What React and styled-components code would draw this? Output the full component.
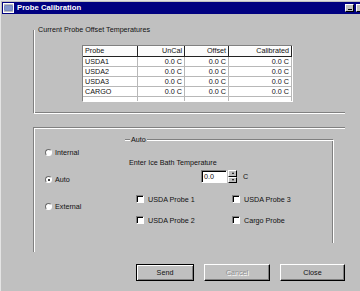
import React from "react";
import styled, { createGlobalStyle, css } from "styled-components";

const GlobalStyle = createGlobalStyle`
  * { box-sizing: border-box; }
  html, body { margin: 0; padding: 0; background: #c0c0c0; }
  body {
    font-family: "Liberation Sans", Arial, sans-serif;
    font-size: 7.2px;
    color: #111;
  }
`;

const Window = styled.div`
  width: 360px;
  height: 291px;
  overflow: hidden;
  background: #c0c0c0;
  border-top: 1px solid #e4e4e4;
  border-left: 1px solid #e4e4e4;
  padding: 1px 0 0 1px;
  display: flex;
  flex-direction: column;
`;

const TitleBar = styled.div`
  height: 12px;
  width: 370px;
  flex: none;
  background: #000080;
  display: flex;
  align-items: center;
  padding-left: 1px;
`;

const TitleText = styled.span`
  color: #fff;
  font-weight: bold;
  font-size: 7.7px;
  margin-left: 3px;
  line-height: 12px;
`;

const TitleButtons = styled.div`
  margin-left: auto;
  display: flex;
  gap: 2px;
  padding-right: 7px;
`;

const CapButton = styled.div`
  width: 9px;
  height: 8px;
  background: #c0c0c0;
  border: 1px solid;
  border-color: #fff #000 #000 #fff;
  position: relative;
  display: flex;
  align-items: flex-end;
  justify-content: center;
  padding-bottom: 1px;
`;

const MinGlyph = styled.div`
  width: 4px;
  height: 1.5px;
  background: #000;
`;

const Body = styled.div`
  margin-left: 31px;
  display: flex;
  flex-direction: column;
`;

const TopGroup = styled.div`
  margin-top: 16px;
  width: 312px;
  height: 84px;
  border-left: 1px solid #808080;
  border-bottom: 1px solid #fff;
  box-shadow: inset 1px 0 #fff, inset 0 -1px #808080;
  display: flex;
  flex-direction: column;
`;

const Legend = styled.div`
  height: 9px;
  line-height: 9px;
  margin-top: -5px;
  margin-left: 3px;
  padding: 0 1px;
  align-self: flex-start;
  background: #c0c0c0;
  white-space: nowrap;
`;

const Table = styled.div`
  margin-top: 11px;
  margin-left: 48px;
  width: 211px;
  height: 57px;
  background: #fff;
  border: 1px solid;
  border-color: #808080 #fff #fff #808080;
  display: grid;
  grid-template-columns: 55px 47px 44px 1fr;
  grid-template-rows: 11px repeat(5, 10px);
  overflow: hidden;
`;

const HeadCell = styled.div`
  background: #fbfbfb;
  border-right: 1px solid #222;
  border-bottom: 1px solid #222;
  box-shadow: inset 1px 1px #fff;
  line-height: 10px;
  padding: 0 2px;
  text-align: ${(p) => (p.$left ? "left" : "right")};
  white-space: nowrap;
  overflow: hidden;
`;

const Cell = styled.div`
  border-right: 1px solid #b8b8b8;
  border-bottom: 1px solid #b8b8b8;
  line-height: 9px;
  padding: 0 2px;
  text-align: ${(p) => (p.$left ? "left" : "right")};
  white-space: nowrap;
  overflow: hidden;
`;

const LowerGroup = styled.div`
  margin-top: 13px;
  width: 312px;
  height: 125px;
  border-top: 1px solid #808080;
  border-left: 1px solid #808080;
  box-shadow: inset 1px 1px #fff;
  display: flex;
  justify-content: space-between;
  align-items: flex-start;
`;

const RadioColumn = styled.div`
  margin-left: 11px;
  margin-top: 20px;
  display: flex;
  flex-direction: column;
  gap: 18px;
`;

const RadioItem = styled.label`
  display: flex;
  align-items: center;
  height: 9px;
  gap: 3px;
`;

const RadioDot = styled.span`
  width: 7px;
  height: 7px;
  border-radius: 50%;
  background: #fff;
  border: 1px solid;
  border-color: #6a6a6a #fff #fff #6a6a6a;
  box-shadow: 0 0 0 0.5px #c0c0c0;
  position: relative;
  flex: none;
  ${(p) =>
    p.$checked &&
    css`
      &::after {
        content: "";
        position: absolute;
        left: 1.5px;
        top: 1.5px;
        width: 2px;
        height: 2px;
        border-radius: 50%;
        background: #000;
      }
    `}
`;

const AutoGroup = styled.div`
  margin-top: 11px;
  margin-right: 11px;
  width: 209px;
  height: 104px;
  border-top: 1px solid #808080;
  border-right: 1px solid #fff;
  box-shadow: inset 0 1px #fff, inset -1px 0 #808080;
  display: flex;
  flex-direction: column;
`;

const AutoLegend = styled(Legend)`
  margin-left: 5px;
`;

const Prompt = styled.div`
  margin-top: 14px;
  margin-left: 4px;
  height: 9px;
  line-height: 9px;
`;

const SpinRow = styled.div`
  margin-top: 3px;
  margin-left: 76px;
  display: flex;
  align-items: center;
  height: 13px;
`;

const SpinInput = styled.div`
  width: 26px;
  height: 13px;
  background: #fff;
  border: 1px solid;
  border-color: #808080 #fff #fff #808080;
  box-shadow: inset 1px 1px #000;
  line-height: 11px;
  padding-left: 2px;
`;

const SpinButtons = styled.div`
  width: 9px;
  height: 13px;
  margin-left: 1px;
  display: flex;
  flex-direction: column;
`;

const SpinHalf = styled.div`
  flex: 1;
  background: #c0c0c0;
  border: 1px solid;
  border-color: #fff #000 #000 #fff;
  display: flex;
  align-items: center;
  justify-content: center;
`;

const Arrow = styled.span`
  width: 0;
  height: 0;
  border-left: 1.5px solid transparent;
  border-right: 1.5px solid transparent;
  ${(p) =>
    p.$up
      ? css`border-bottom: 2px solid #000;`
      : css`border-top: 2px solid #000;`}
`;

const Unit = styled.span`
  margin-left: 6px;
`;

const CheckGrid = styled.div`
  margin-top: 12px;
  margin-left: 11px;
  display: grid;
  grid-template-columns: 96px auto;
  row-gap: 13px;
`;

const CheckItem = styled.label`
  display: flex;
  align-items: center;
  height: 8px;
  gap: 4px;
`;

const CheckBox = styled.span`
  width: 8px;
  height: 8px;
  background: #fff;
  border: 1px solid;
  border-color: #808080 #fff #fff #808080;
  box-shadow: inset 1px 1px #000;
  flex: none;
`;

const ButtonRow = styled.div`
  margin-top: 12px;
  margin-left: 103px;
  display: flex;
  gap: 10px;
`;

const Button = styled.div`
  width: ${(p) => p.$w}px;
  height: 17px;
  background: #c0c0c0;
  border: 1px solid;
  border-color: #fff #000 #000 #fff;
  box-shadow: inset -1px -1px #808080;
  display: flex;
  align-items: center;
  justify-content: center;
  color: ${(p) => (p.$disabled ? "#909090" : "#111")};
  text-shadow: ${(p) => (p.$disabled ? "1px 1px #fff" : "none")};
  ${(p) =>
    p.$default &&
    css`
      border-color: #000;
      box-shadow: inset 1px 1px #fff, inset -1px -1px #808080;
    `}
`;

const TitleIcon = () => (
  <svg width="11" height="10" viewBox="0 0 11 10">
    <rect x="0.5" y="0.5" width="10" height="9" fill="#c0c0c0" stroke="#fff" />
    <rect x="1.5" y="2.5" width="8" height="5" fill="#3050b0" />
    <line x1="2" y1="4" x2="9" y2="4" stroke="#fff" strokeWidth="0.8" />
    <line x1="2" y1="6" x2="9" y2="6" stroke="#fff" strokeWidth="0.8" />
  </svg>
);

const rows = ["USDA1", "USDA2", "USDA3", "CARGO"];

export default function App() {
  return (
    <>
      <GlobalStyle />
      <Window>
        <TitleBar>
          <TitleIcon />
          <TitleText>Probe Calibration</TitleText>
          <TitleButtons>
            <CapButton>
              <MinGlyph />
            </CapButton>
            <CapButton />
          </TitleButtons>
        </TitleBar>
        <Body>
          <TopGroup>
            <Legend>Current Probe Offset Temperatures</Legend>
            <Table>
              <HeadCell $left>Probe</HeadCell>
              <HeadCell>UnCal</HeadCell>
              <HeadCell>Offset</HeadCell>
              <HeadCell>Calibrated</HeadCell>
              {rows.map((r) => (
                <React.Fragment key={r}>
                  <Cell $left>{r}</Cell>
                  <Cell>0.0 C</Cell>
                  <Cell>0.0 C</Cell>
                  <Cell>0.0 C</Cell>
                </React.Fragment>
              ))}
              <Cell />
              <Cell />
              <Cell />
              <Cell />
            </Table>
          </TopGroup>
          <LowerGroup>
            <RadioColumn>
              <RadioItem>
                <RadioDot />
                Internal
              </RadioItem>
              <RadioItem>
                <RadioDot $checked />
                Auto
              </RadioItem>
              <RadioItem>
                <RadioDot />
                External
              </RadioItem>
            </RadioColumn>
            <AutoGroup>
              <AutoLegend>Auto</AutoLegend>
              <Prompt>Enter Ice Bath Temperature</Prompt>
              <SpinRow>
                <SpinInput>0.0</SpinInput>
                <SpinButtons>
                  <SpinHalf>
                    <Arrow $up />
                  </SpinHalf>
                  <SpinHalf>
                    <Arrow />
                  </SpinHalf>
                </SpinButtons>
                <Unit>C</Unit>
              </SpinRow>
              <CheckGrid>
                <CheckItem>
                  <CheckBox />
                  USDA Probe 1
                </CheckItem>
                <CheckItem>
                  <CheckBox />
                  USDA Probe 3
                </CheckItem>
                <CheckItem>
                  <CheckBox />
                  USDA Probe 2
                </CheckItem>
                <CheckItem>
                  <CheckBox />
                  Cargo Probe
                </CheckItem>
              </CheckGrid>
            </AutoGroup>
          </LowerGroup>
          <ButtonRow>
            <Button $w={58} $default>Send</Button>
            <Button $w={66} $disabled>Cancel</Button>
            <Button $w={65}>Close</Button>
          </ButtonRow>
        </Body>
      </Window>
    </>
  );
}
